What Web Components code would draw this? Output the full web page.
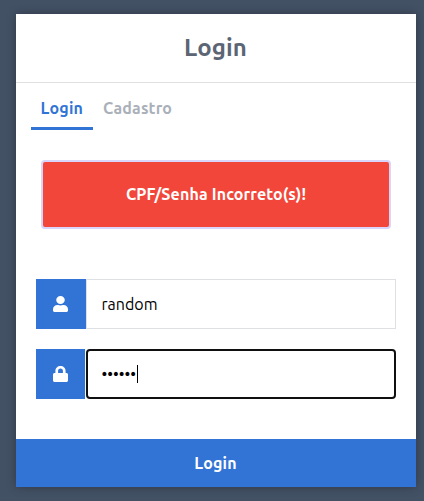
<!DOCTYPE html>
<html lang="pt-BR">
<head>
<meta charset="utf-8">
<title>Login</title>
<style>
html{height:100%}
body{margin:0;min-height:100%;background:#435165;font-family:"Ubuntu","Noto Sans","Open Sans",sans-serif;font-size:16px;overflow:hidden}
</style>
</head>
<body>
<login-card>
  <span slot="title">Login</span>
  <login-tab slot="tabs" active>Login</login-tab>
  <login-tab slot="tabs">Cadastro</login-tab>
  <alert-box slot="alert">CPF/Senha Incorreto(s)!</alert-box>
  <icon-field slot="fields" icon="user">random</icon-field>
  <icon-field slot="fields" icon="lock" focused>••••••</icon-field>
  <submit-button slot="action">Login</submit-button>
</login-card>
<script>
const define = (name, html, setup) => {
  const template = document.createElement('template');
  template.innerHTML = html;
  customElements.define(name, class extends HTMLElement {
    connectedCallback() {
      if (this.shadowRoot) return;
      this.attachShadow({mode: 'open'}).append(template.content.cloneNode(true));
      if (setup) setup(this, this.shadowRoot);
    }
  });
};

define('login-card', `<style>
:host{display:flex;flex-direction:column;width:400px;height:473px;margin:14px 8px 14px 16px;background:#fff;box-shadow:0 0 9px rgba(0,0,0,.3)}
header{box-sizing:border-box;height:69px;display:flex;justify-content:center;align-items:center;border-bottom:1px solid #dee0e4;color:#5b6574;font-size:24px;font-weight:700;letter-spacing:.1px;padding:0 1px 2px 0}
nav{display:flex;height:47px;padding-left:15px}
.alert{padding:30px 25px 0}
.fields{display:grid;gap:20px;padding:50px 20px 40px}
</style>
<header><slot name="title"></slot></header>
<nav><slot name="tabs"></slot></nav>
<div class="alert"><slot name="alert"></slot></div>
<div class="fields"><slot name="fields"></slot></div>
<slot name="action"></slot>`);

define('login-tab', `<style>
:host{box-sizing:border-box;display:flex;align-items:flex-start;height:47px;padding:14px 10px 0;color:#aab0b9;font-weight:700;line-height:22px;letter-spacing:.15px;border-bottom:3px solid transparent}
:host([active]){width:62px;padding:14px 0 0 9.600px;color:#3274d6;border-color:#3274d6}
</style><slot></slot>`);

define('alert-box', `<style>
:host{box-sizing:border-box;display:flex;height:69px;align-items:center;justify-content:center;padding-bottom:2px;border:2px solid #d8d4fa;border-radius:4px;background:#f3463a;color:#fff;font-weight:700;line-height:22px;letter-spacing:.14px}
</style><slot></slot>`);

const icons = {
  user: 'M224 256c70.7 0 128-57.3 128-128S294.7 0 224 0 96 57.3 96 128s57.3 128 128 128zm89.6 32h-16.7c-22.2 10.2-46.9 16-72.9 16s-50.6-5.8-72.9-16h-16.7C60.2 288 0 348.2 0 422.4V464c0 26.5 21.5 48 48 48h352c26.5 0 48-21.5 48-48v-41.6c0-74.2-60.2-134.4-134.4-134.4z',
  lock: 'M400 224h-24v-72C376 68.2 307.800 0 224 0S72 68.200 72 152v72H48c-26.500 0-48 21.500-48 48v192c0 26.500 21.500 48 48 48h352c26.500 0 48-21.500 48-48V272c0-26.500-21.500-48-48-48zm-104 0H152v-72c0-39.700 32.300-72 72-72s72 32.300 72 72v72z'
};

define('icon-field', `<style>
:host{display:flex;height:50px}
.icon{box-sizing:border-box;width:50px;padding-right:1px;display:grid;place-items:center;background:#3274d6}
:host([focused]) .icon{border-right:1px solid #f4f7fd;padding-right:0}
svg{display:block;width:15px;height:16px;fill:#fff}
.input{box-sizing:border-box;flex:1;display:flex;align-items:center;padding-left:14.500px;border:1px solid #dee0e4;color:#000;line-height:22px}
:host([focused]) .input{border:2px solid #101010;border-radius:4px;padding-left:13.500px}
.caret{display:none;width:1px;height:18px;background:#000;margin-left:.8px}
:host([focused]) .caret{display:block}
</style>
<div class="icon"><svg viewBox="0 0 448 512" preserveAspectRatio="none"><path/></svg></div>
<div class="input"><slot></slot><span class="caret"></span></div>`,
(host, root) => root.querySelector('path').setAttribute('d', icons[host.getAttribute('icon')]));

define('submit-button', `<style>
:host{box-sizing:border-box;display:flex;height:48px;align-items:center;justify-content:center;padding-right:1px;background:#3274d6;color:#fff;font-weight:700;line-height:22px;letter-spacing:.12px}
</style><slot></slot>`);
</script>
</body>
</html>
